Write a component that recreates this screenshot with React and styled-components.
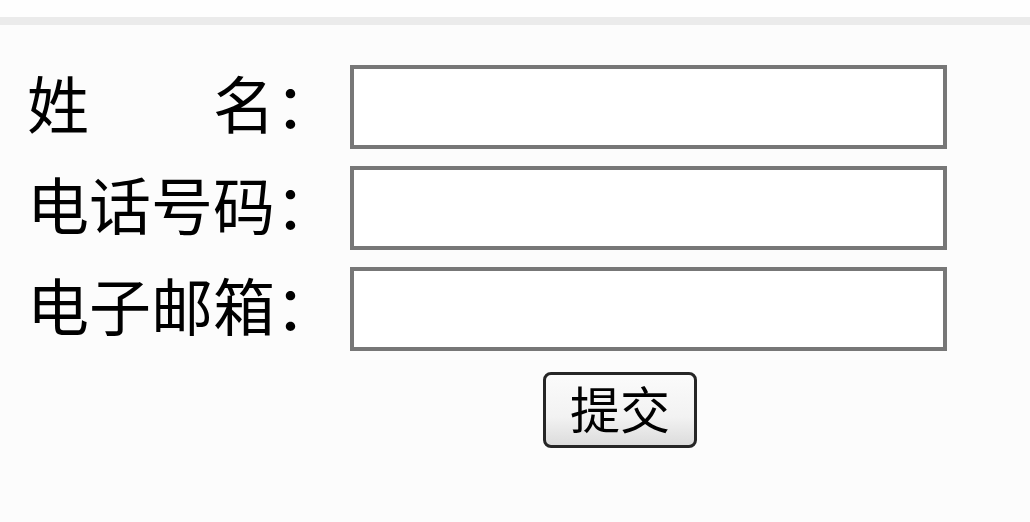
import React from "react";
import styled, { createGlobalStyle } from "styled-components";

const GlobalStyle = createGlobalStyle`
    html, body {
        margin: 0;
        padding: 0;
        background: #fcfcfc;
        font-family: "Noto Sans CJK SC", "Liberation Sans", sans-serif;
    }
`;

const TopStrip = styled.div`
    height: 17px;
    background: #fefefe;
    border-bottom: 8px solid #ebebeb;
`;

const Form = styled.form`
    display: grid;
    grid-template-columns: 310px 597px;
    column-gap: 13px;
    row-gap: 17px;
    padding: 40px 0 0 27px;
`;

const Label = styled.label`
    display: flex;
    align-items: center;
    padding-bottom: 10px;
    font-size: 62px;
    line-height: 1;
    color: #000;
    white-space: pre;
`;

const Input = styled.input`
    box-sizing: border-box;
    width: 597px;
    height: 84px;
    margin: 0;
    border: 4px solid #777;
    background: #fff;
    outline: none;
`;

const ButtonRow = styled.div`
    grid-column: 2;
    padding: 4px 0 0 193px;
`;

const Button = styled.button`
    box-sizing: border-box;
    width: 154px;
    height: 76px;
    padding: 0 0 6px;
    border: 3px solid #262626;
    border-radius: 8px;
    background: linear-gradient(#fbfbfb, #f2f2f2 60%, #dcdcdc);
    font-family: "Noto Sans CJK SC", sans-serif;
    font-size: 50px;
    line-height: 1;
    color: #000;
`;

const fields = [
    { id: "name", label: "姓\u3000\u3000名：" },
    { id: "phone", label: "电话号码：" },
    { id: "email", label: "电子邮箱：" },
];

export default function App() {
    return (
        <>
            <GlobalStyle />
            <TopStrip />
            <Form onSubmit={(e) => e.preventDefault()}>
                {fields.map((f) => (
                    <React.Fragment key={f.id}>
                        <Label htmlFor={f.id}>{f.label}</Label>
                        <Input id={f.id} type="text" />
                    </React.Fragment>
                ))}
                <ButtonRow>
                    <Button type="submit">提交</Button>
                </ButtonRow>
            </Form>
        </>
    );
}
